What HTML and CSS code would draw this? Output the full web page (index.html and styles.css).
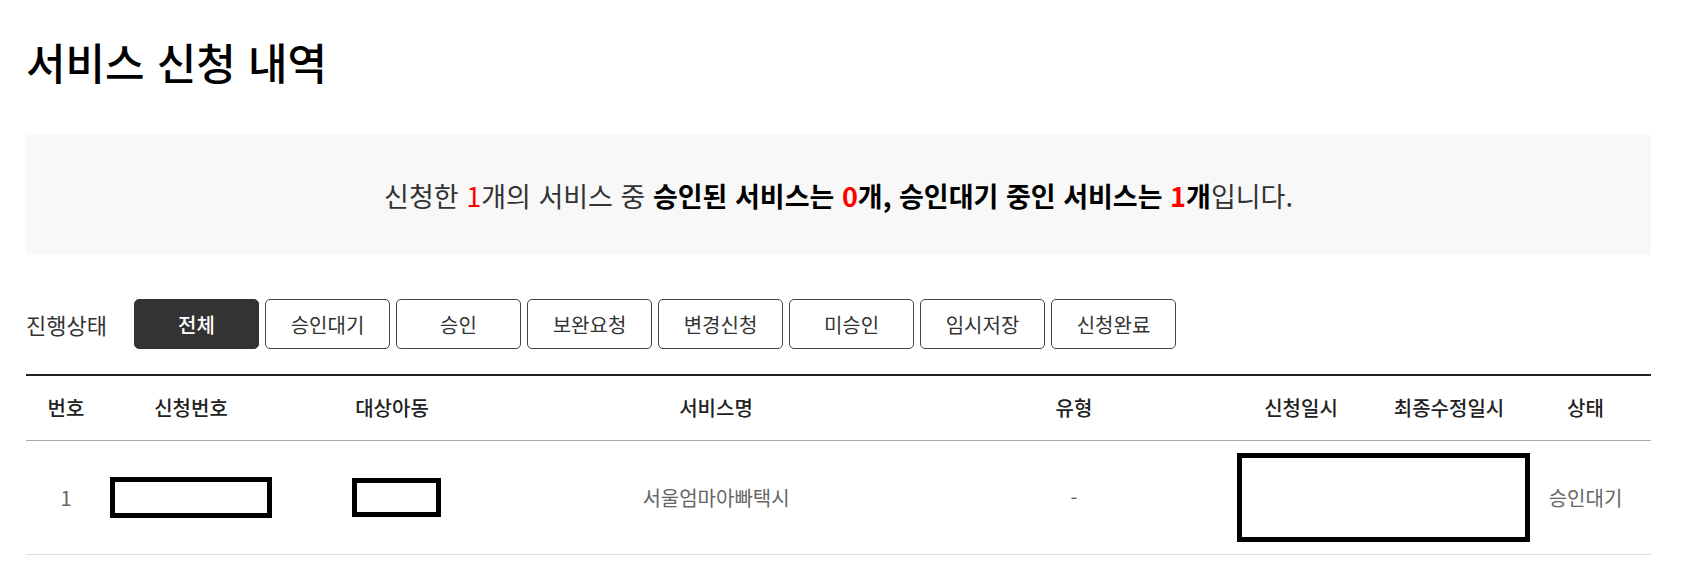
FILE: index.html
```html
<!DOCTYPE html>
<html lang="ko">
<head>
<meta charset="utf-8">
<title>서비스 신청 내역</title>
<link rel="stylesheet" href="styles.css">
</head>
<body>
<main class="page">
  <h1 class="title">서비스 신청 내역</h1>

  <section class="summary">
    <p class="summary-text">신청한 <em class="num">1</em>개의 서비스 중 <strong>승인된 서비스는 <em class="num">0</em>개, 승인대기 중인 서비스는 <em class="num">1</em>개</strong>입니다.</p>
  </section>

  <div class="filter">
    <span class="filter-label">진행상태</span>
    <div class="filter-buttons">
      <button class="chip active">전체</button>
      <button class="chip">승인대기</button>
      <button class="chip">승인</button>
      <button class="chip">보완요청</button>
      <button class="chip">변경신청</button>
      <button class="chip">미승인</button>
      <button class="chip">임시저장</button>
      <button class="chip">신청완료</button>
    </div>
  </div>

  <table class="list">
    <colgroup>
      <col class="c-no">
      <col class="c-reqno">
      <col class="c-child">
      <col class="c-name">
      <col class="c-type">
      <col class="c-date">
      <col class="c-mod">
      <col class="c-state">
    </colgroup>
    <thead>
      <tr>
        <th>번호</th>
        <th>신청번호</th>
        <th>대상아동</th>
        <th>서비스명</th>
        <th>유형</th>
        <th>신청일시</th>
        <th>최종수정일시</th>
        <th>상태</th>
      </tr>
    </thead>
    <tbody>
      <tr>
        <td>1</td>
        <td><span class="redact redact-reqno"></span></td>
        <td><span class="redact redact-child"></span></td>
        <td>서울엄마아빠택시</td>
        <td>-</td>
        <td class="date-cell"><span class="redact redact-date"></span></td>
        <td></td>
        <td>승인대기</td>
      </tr>
    </tbody>
  </table>
</main>
</body>
</html>
```

FILE: styles.css
```css
* {
  box-sizing: border-box;
}

html, body {
  margin: 0;
  padding: 0;
  background: #fff;
}

body {
  font-family: "Noto Sans CJK KR", "Noto Sans", sans-serif;
  color: #333;
}

.page {
  width: 1651px;
  padding: 35px 0 0 26px;
}

.title {
  margin: 0;
  font-size: 43px;
  line-height: 52px;
  font-weight: 500;
  color: #000;
}

.summary {
  margin-top: 48px;
  height: 120px;
  background: #f8f8f8;
  display: flex;
  align-items: center;
  justify-content: center;
}

.summary-text {
  margin: 0;
  font-size: 27px;
  line-height: 1;
  color: #333;
}

.summary-text strong {
  font-weight: 700;
  color: #000;
}

.summary-text .num {
  font-style: normal;
  color: #f00;
  font-weight: 400;
}

.summary-text strong .num {
  font-weight: 700;
}

.filter {
  margin-top: 44px;
  display: flex;
  align-items: center;
}

.filter-label {
  width: 108px;
  font-size: 22px;
  color: #333;
}

.filter-buttons {
  display: flex;
  gap: 6px;
}

.chip {
  width: 125px;
  height: 50px;
  border: 1px solid #444;
  border-radius: 5px;
  background: #fff;
  font-family: inherit;
  font-size: 20px;
  color: #333;
  padding: 0;
}

.chip.active {
  background: #333;
  border-color: #333;
  color: #fff;
  font-weight: 500;
}

.list {
  margin-top: 25px;
  width: 100%;
  table-layout: fixed;
  border-collapse: collapse;
  border-top: 2px solid #222;
}

.c-no { width: 80px; }
.c-reqno { width: 170px; }
.c-child { width: 232px; }
.c-name { width: 416px; }
.c-type { width: 300px; }
.c-date { width: 154px; }
.c-mod { width: 142px; }
.c-state { width: 131px; }

.list th {
  height: 65px;
  font-size: 20px;
  font-weight: 500;
  color: #222;
  text-align: center;
  border-bottom: 1px solid #aaa;
  padding: 0;
}

.list td {
  padding: 12px 0 12px;
  font-size: 20px;
  color: #666;
  text-align: center;
  vertical-align: middle;
  border-bottom: 1px solid #ddd;
}

.redact {
  display: inline-block;
  vertical-align: middle;
  border: 5px solid #000;
  background: #fff;
}

.redact-reqno {
  width: 162px;
  height: 41px;
}

.redact-child {
  width: 89px;
  height: 39px;
  margin-left: 9px;
}

.date-cell {
  text-align: left;
  overflow: visible;
}

.redact-date {
  display: block;
  margin-left: 13px;
  width: 293px;
  height: 89px;
  position: relative;
  z-index: 1;
}
```
